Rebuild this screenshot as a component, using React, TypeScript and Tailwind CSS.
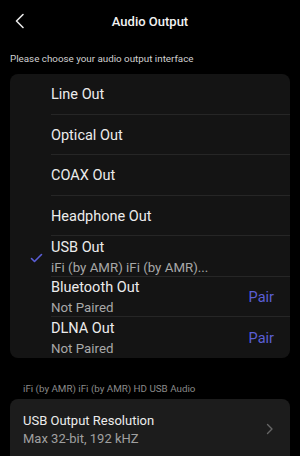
import React from "react";

const rows: { title: string; sub?: string; checked?: boolean; pair?: boolean }[] = [
  { title: "Line Out" },
  { title: "Optical Out" },
  { title: "COAX Out" },
  { title: "Headphone Out" },
  { title: "USB Out", sub: "iFi (by AMR) iFi (by AMR)...", checked: true },
  { title: "Bluetooth Out", sub: "Not Paired", pair: true },
  { title: "DLNA Out", sub: "Not Paired", pair: true },
];

export default function App() {
  return (
    <div className="w-[300px] h-[456px] overflow-hidden bg-black text-white" style={{ fontFamily: "Roboto, 'Noto Sans', sans-serif" }}>
      <div className="relative h-[43px] flex items-center justify-center">
        <svg className="absolute left-[14px] top-[13px]" width="12" height="16" viewBox="0 0 12 16">
          <path d="M9 1.5 L2.5 8 L9 14.5" fill="none" stroke="#e8e8e8" strokeWidth="1.6" strokeLinecap="round" strokeLinejoin="round" />
        </svg>
        <span className="text-[13px] font-medium text-[#f2f2f2]">Audio Output</span>
      </div>
      <div className="px-[10px] pt-[9px] text-[9.8px] leading-[14px] text-[#d0d0d0]">Please choose your audio output interface</div>
      <div className="mx-[10px] mt-[8px] rounded-[8px] bg-[#141414] overflow-hidden">
        {rows.map((r, i) => (
          <div key={i} className="relative flex h-[40.5px]">
            <div className="w-[41px] flex items-center justify-center pl-[12px] pt-[3px]">
              {r.checked && (
                <svg width="13" height="10" viewBox="0 0 13 10">
                  <path d="M1.5 5.5 L4.5 8.5 L11.5 1.5" fill="none" stroke="#5a5ed6" strokeWidth="1.6" strokeLinecap="round" strokeLinejoin="round" />
                </svg>
              )}
            </div>
            <div className={`flex-1 flex items-center pt-[3px] ${i < rows.length - 1 ? "border-b border-[#262626]" : ""}`}>
              <div className="flex-1 flex flex-col justify-center">
                <div className="text-[14.5px] leading-[20px] text-[#ececec]">{r.title}</div>
                {r.sub && <div className="text-[13.3px] leading-[19px] text-[#a8a8a8]">{r.sub}</div>}
              </div>
              {r.pair && <div className="pr-[16px] text-[14.5px] text-[#5b5fd6]">Pair</div>}
            </div>
          </div>
        ))}
      </div>
      <div className="px-[23px] mt-[25px] text-[9.8px] leading-[12px] text-[#8a8a8a]">iFi (by AMR) iFi (by AMR) HD USB Audio</div>
      <div className="mx-[10px] mt-[4px] rounded-[8px] bg-[#1c1c1c] h-[80px] px-[13px] pt-[13px] flex">
        <div className="flex-1">
          <div className="text-[13px] leading-[18px] text-[#ececec]">USB Output Resolution</div>
          <div className="text-[13px] leading-[18px] text-[#a0a0a0]">Max 32-bit, 192 kHZ</div>
        </div>
        <svg className="mt-[11px] mr-[3px]" width="8" height="12" viewBox="0 0 8 12">
          <path d="M1.5 1.5 L6 6 L1.5 10.5" fill="none" stroke="#666" strokeWidth="1.4" strokeLinecap="round" strokeLinejoin="round" />
        </svg>
      </div>
    </div>
  );
}
